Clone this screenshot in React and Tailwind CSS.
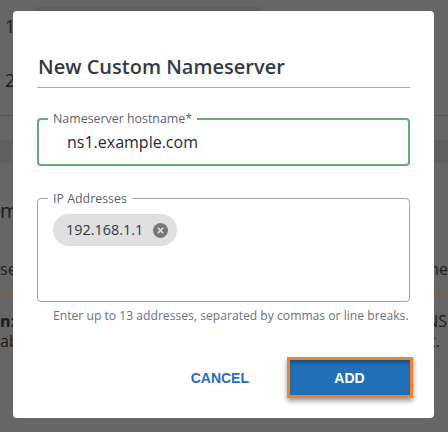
export default function App() {
  return (
    <div className="relative h-[432px] w-[448px] overflow-hidden bg-[#666666] font-['Open_Sans',sans-serif] text-[#1c1c1c]">
      {/* page behind the overlay */}
      <div className="flex h-[116px] flex-col border-b border-[#555555] pt-[7px]">
        <div className="ml-[34px] h-[10px] w-[228px] shrink-0 rounded-t-[4px] bg-[#5f5f5f]" />
        <div className="pl-[5px] text-[18px] leading-[18px]">1</div>
        <div className="mt-[36px] pl-[5px] text-[18px] leading-[18px]">2</div>
      </div>
      <div className="h-[24px]" />
      <div className="h-[23px] bg-[#5f5f5f]" />
      <div className="h-[36px]" />
      <div className="text-[20px] leading-[24px]">m</div>
      <div className="flex h-[71px] items-center justify-between pt-[20px] text-[16px] leading-[20px]">
        <span>se</span>
        <span>ne</span>
      </div>
      <div className="h-[74px] border-y border-[#7d6526] pt-[16px] text-[16px] leading-[20px]">
        <div className="flex justify-between">
          <span className="font-bold">n:</span>
          <span className="mr-[1px]">NS</span>
        </div>
        <div className="flex justify-between">
          <span>ab</span>
          <span className="mr-[8px]">t.</span>
        </div>
      </div>

      {/* modal */}
      <div className="absolute left-[13px] top-[11px] flex h-[407px] w-[421px] flex-col rounded-[4px] bg-white pl-6 pr-6">
        <h2 className="flex h-[77px] items-end border-b border-[#a8a8a8] pb-[6px] pl-[1px] text-[20px] font-semibold leading-[28px] text-[#333a45]">New Custom Nameserver</h2>

        <fieldset className="relative mt-[24px] h-[54px] w-[373px] rounded-[4px] border-2 border-[#61ad76] pl-[9px]">
          <legend className="px-[5px] text-[12.4px] leading-[14px] text-[#5b6270]">Nameserver hostname*</legend>
          <div className="mt-[5px] pl-[19px] text-[16px] leading-[22px] text-[#1f2937]">ns1.example.com</div>
        </fieldset>

        <fieldset className="mt-[26px] h-[110px] w-[373px] rounded-[4px] border border-[#a3a3a3] pl-[15px]">
          <legend className="-ml-[5px] px-[5px] text-[12.4px] leading-[13px] text-[#5b6270]">IP Addresses</legend>
          <div className="mt-[9px] flex h-[32px] w-[124px] items-center rounded-full bg-[#e0e0e0] pl-[13px]">
            <span className="text-[14.4px] leading-[20px] text-[#333a45]">192.168.1.1</span>
            <svg className="ml-[10px]" width="15" height="15" viewBox="0 0 15 15">
              <circle cx="7.5" cy="7.5" r="7.5" fill="#777777" />
              <path d="M4.8 4.8 10.2 10.2M10.2 4.8 4.8 10.2" stroke="#e0e0e0" strokeWidth="1.6" />
            </svg>
          </div>
        </fieldset>

        <p className="mt-[5px] pl-[16px] text-[12.15px] leading-[18px] whitespace-nowrap text-[#6b7280]">Enter up to 13 addresses, separated by commas or line breaks.</p>

        <div className="mt-[32px] flex items-center justify-end">
          <button className="mr-[38px] pt-[2px] font-['Liberation_Sans',sans-serif] text-[14px] font-bold text-[#1f6fbf]">CANCEL</button>
          <button className="mr-[-3px] h-[41px] w-[126px] border-[3px] border-[#f5822a] bg-[#2170b8] pt-[1px] pr-[1px] font-['Liberation_Sans',sans-serif] text-[14px] font-bold text-white shadow-[inset_0_5px_4px_-2px_rgba(0,0,0,0.3),0_3px_5px_rgba(0,0,0,0.4)]">ADD</button>
        </div>
      </div>
    </div>
  );
}
